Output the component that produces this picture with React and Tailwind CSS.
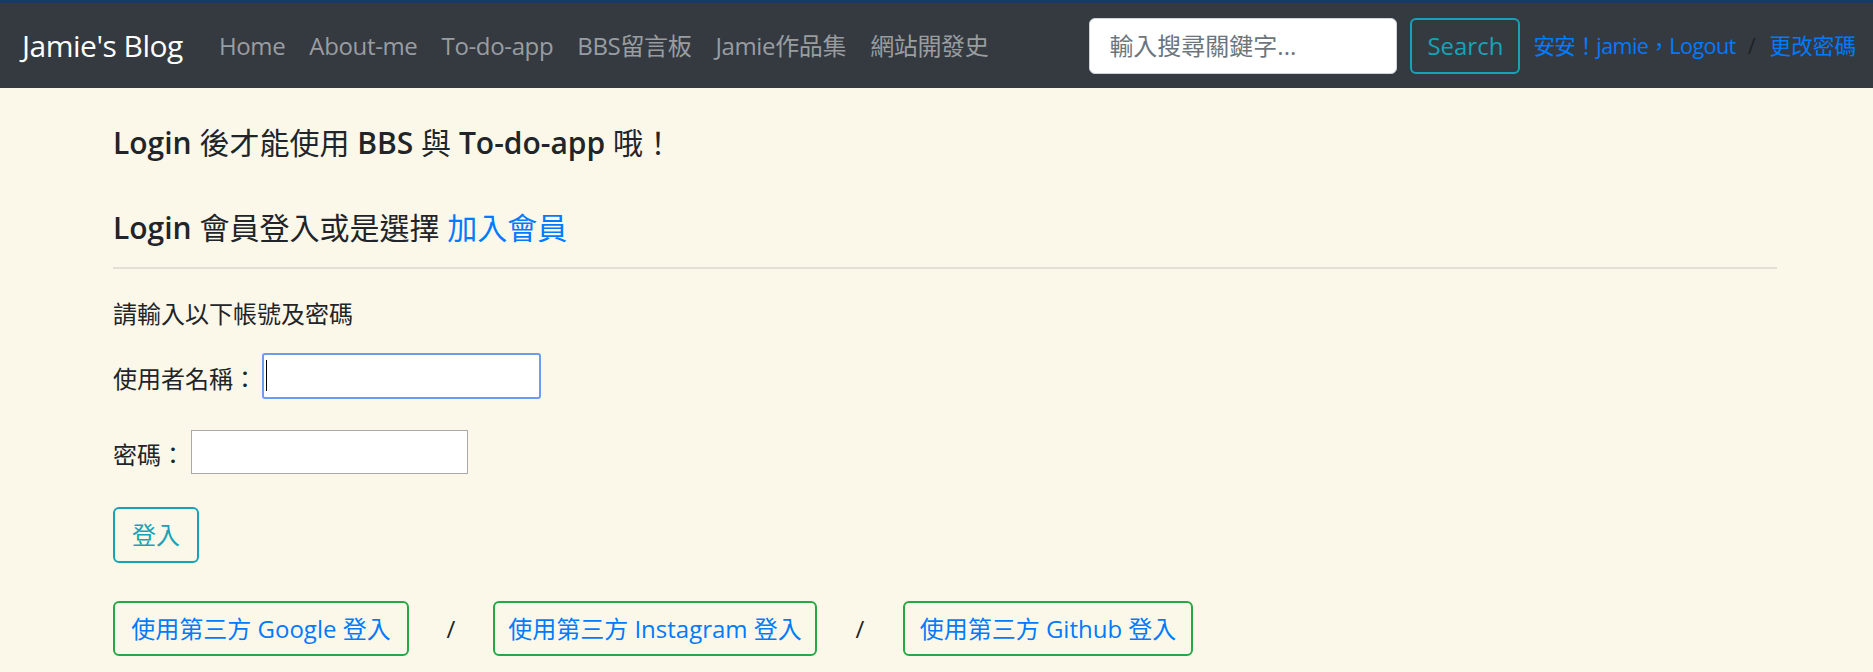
import React from "react";

const font = "font-['Open_Sans','Noto_Sans_CJK_TC',sans-serif]";

export default function App() {
  return (
    <div className={`min-h-[672px] bg-[#fcf8e9] ${font} text-[#212529]`}>
      <nav className="flex h-[88px] items-center border-t-[3px] border-[#173a68] bg-[#343a40] pl-[22px] pr-[17px]">
        <a className="mr-[24px] text-[30px] leading-[45px] tracking-[-0.5px] text-white">Jamie's Blog</a>
        <ul className="flex items-center">
          {["Home", "About-me", "To-do-app", "BBS留言板", "Jamie作品集", "網站開發史"].map((t) => (
            <li key={t}>
              <a className="block px-[12px] text-[24px] leading-[36px] tracking-[-0.35px] text-[#9a9da0]">{t}</a>
            </li>
          ))}
        </ul>
        <div className="ml-auto flex items-center">
          <input
            className="h-[56px] w-[308px] rounded-[6px] border-[1.5px] border-[#ced4da] bg-white px-[19px] text-[24px] text-[#495057] placeholder:text-[#6c757d] outline-none"
            placeholder="輸入搜尋關鍵字..."
          />
          <button className="ml-[13px] h-[56px] w-[110px] rounded-[6px] border-2 border-[#17a2b8] text-[24px] text-[#17a2b8]">
            Search
          </button>
          <a className="ml-[13px] text-[21.6px] leading-[32px] tracking-[-0.6px] text-[#007bff]">安安！jamie，Logout</a>
          <span className="ml-[12px] mr-[14px] text-[21.6px] leading-[32px] text-[#1e2226]">/</span>
          <a className="text-[21.6px] leading-[32px] text-[#007bff]">更改密碼</a>
        </div>
      </nav>

      <main className="ml-[113px] w-[1664px]">
        <h5 className="mt-[37px] text-[30px] leading-[36px]">
          <span className="font-semibold">Login</span> 後才能使用 <span className="font-semibold">BBS</span> 與{" "}
          <span className="font-semibold">To-do-app</span> 哦！
        </h5>
        <h5 className="mt-[49px] text-[30px] leading-[36px]">
          <span className="font-semibold">Login</span> 會員登入或是選擇 <a className="text-[#007bff]">加入會員</a>
        </h5>
        <hr className="mt-[21px] border-0 border-t-2 border-[#e4e0d3]" />
        <p className="mt-[27px] text-[24px] leading-[36px]">請輸入以下帳號及密碼</p>

        <div className="mt-[21px] flex items-center">
          <label className="translate-y-[3px] text-[24px] leading-[36px]">使用者名稱：</label>
          <div className="relative ml-[5px]">
            <input className="block h-[46px] w-[279px] rounded-[3px] border-2 border-[#6a9cf0] bg-white px-[8px] text-[20px] outline-none" />
            <span className="absolute left-[4px] top-[7px] h-[31px] w-px bg-black" />
          </div>
        </div>

        <div className="mt-[31px] flex items-center">
          <label className="translate-y-[3px] text-[24px] leading-[36px]">密碼：</label>
          <input
            type="password"
            className="ml-[6px] block h-[44px] w-[277px] border border-[#a9a9a9] bg-white px-[8px] text-[20px] outline-none"
          />
        </div>

        <button className="mt-[33px] block h-[56px] w-[86px] rounded-[6px] border-2 border-[#17a2b8] text-[24px] text-[#17a2b8]">
          登入
        </button>

        <div className="mt-[38px] flex items-center">
          <button className="h-[55px] w-[296px] rounded-[6px] border-2 border-[#28a745] text-[24px] text-[#007bff]">
            使用第三方 Google 登入
          </button>
          <span className="mx-[37px] w-[10px] text-center text-[24px]">/</span>
          <button className="h-[55px] w-[324px] rounded-[6px] border-2 border-[#28a745] text-[24px] text-[#007bff]">
            使用第三方 Instagram 登入
          </button>
          <span className="mx-[38px] w-[10px] text-center text-[24px]">/</span>
          <button className="h-[55px] w-[290px] rounded-[6px] border-2 border-[#28a745] text-[24px] text-[#007bff]">
            使用第三方 Github 登入
          </button>
        </div>
      </main>
    </div>
  );
}
